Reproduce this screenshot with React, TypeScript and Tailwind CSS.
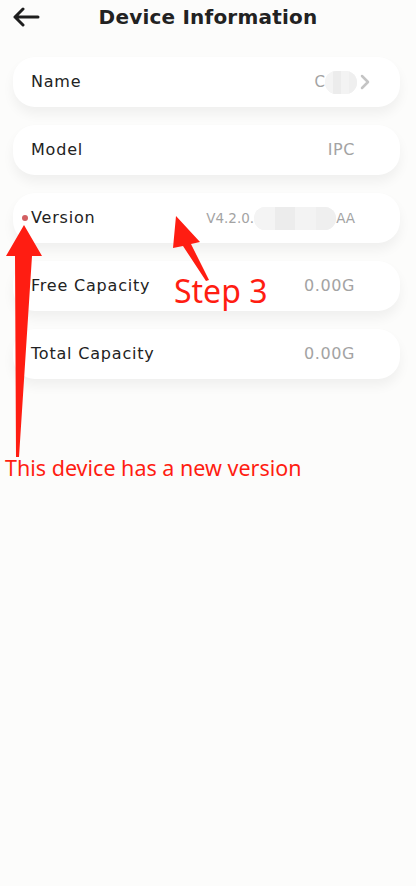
import { ChevronRight } from 'lucide-react';

const rows = [
  { label: 'Name', value: 'name' },
  { label: 'Model', value: 'IPC' },
  { label: 'Version', value: 'version' },
  { label: 'Free Capacity', value: '0.00G' },
  { label: 'Total Capacity', value: '0.00G' },
];

function Blur({ w }: { w: number }) {
  return (
    <span
      className="inline-flex h-[23px] rounded-full overflow-hidden bg-[#f1f1f1]"
      style={{ width: w }}
    >
      <span className="flex-1 bg-[#f4f4f4]" />
      <span className="flex-1 bg-[#ececec]" />
      <span className="flex-1 bg-[#f3f3f3]" />
      <span className="flex-1 bg-[#efefef]" />
    </span>
  );
}

function Value({ v }: { v: string }) {
  if (v === 'name') {
    return (
      <div className="flex items-center">
        <span className="text-[15px] text-[#a3a3a3]">C</span>
        <Blur w={32} />
        <ChevronRight className="w-6 h-6 text-[#c4c4c4] -ml-[4px] -mr-[22px]" strokeWidth={2.5} />
      </div>
    );
  }
  if (v === 'version') {
    return (
      <div className="flex items-center text-[13.5px] text-[#a3a3a3]">
        <span>V4.2.0.</span>
        <Blur w={82} />
        <span>AA</span>
      </div>
    );
  }
  return <span className="text-[16px] tracking-[0.6px] text-[#a3a3a3]">{v}</span>;
}

export default function App() {
  return (
    <div
      className="relative w-[416px] h-[886px] bg-[#fcfcfb] overflow-hidden"
      style={{ fontFamily: '"DejaVu Sans", sans-serif' }}
    >
      {/* Header */}
      <div className="relative h-[34px] flex items-center justify-center">
        <svg className="absolute left-[12px] top-[7px]" width="28" height="20" viewBox="0 0 28 20">
          <path d="M26 10H3M11 2L3 10l8 8" stroke="#1e1e1e" strokeWidth="3" fill="none" strokeLinecap="round" strokeLinejoin="round" />
        </svg>
        <h1 className="text-[20px] font-bold text-[#222] tracking-[0.2px]">Device Information</h1>
      </div>

      {/* Rows */}
      <div className="mt-[23px] px-[13px] flex flex-col gap-[18px]">
        {rows.map((r) => (
          <div
            key={r.label}
            className="h-[50px] mr-[3px] rounded-[22px] bg-white shadow-[0_7px_12px_rgba(0,0,0,0.05)] flex items-center justify-between pl-[18px] pr-[45px]"
          >
            <div className="relative text-[16px] tracking-[0.8px] text-[#222]">
              {r.value === 'version' && (
                <span className="absolute -left-[9px] top-1/2 -translate-y-1/2 w-[6px] h-[6px] rounded-full bg-[#d25f62]" />
              )}
              {r.label}
            </div>
            <Value v={r.value} />
          </div>
        ))}
      </div>

      {/* Annotations */}
      <svg className="absolute left-0 top-0" width="416" height="500" viewBox="0 0 416 500">
        <path d="M24 225 L42 256 L32 256 L19 457 L16 457 L15 256 L6 256 Z" fill="#ff1d12" />
        <path d="M176 216 L200 242 L191 244 L209 280 L206 281 L183 246 L173 248 Z" fill="#ff1d12" />
      </svg>
      <div
        className="absolute left-[174px] top-[275px] text-[32px] leading-none text-[#ff1d12]"
        style={{ fontFamily: '"Noto Sans", sans-serif' }}
      >
        Step 3
      </div>
      <div
        className="absolute left-[5px] top-[457px] text-[21.5px] leading-none text-[#ff1d12]"
        style={{ fontFamily: '"Noto Sans", sans-serif' }}
      >
        This device has a new version
      </div>
    </div>
  );
}
